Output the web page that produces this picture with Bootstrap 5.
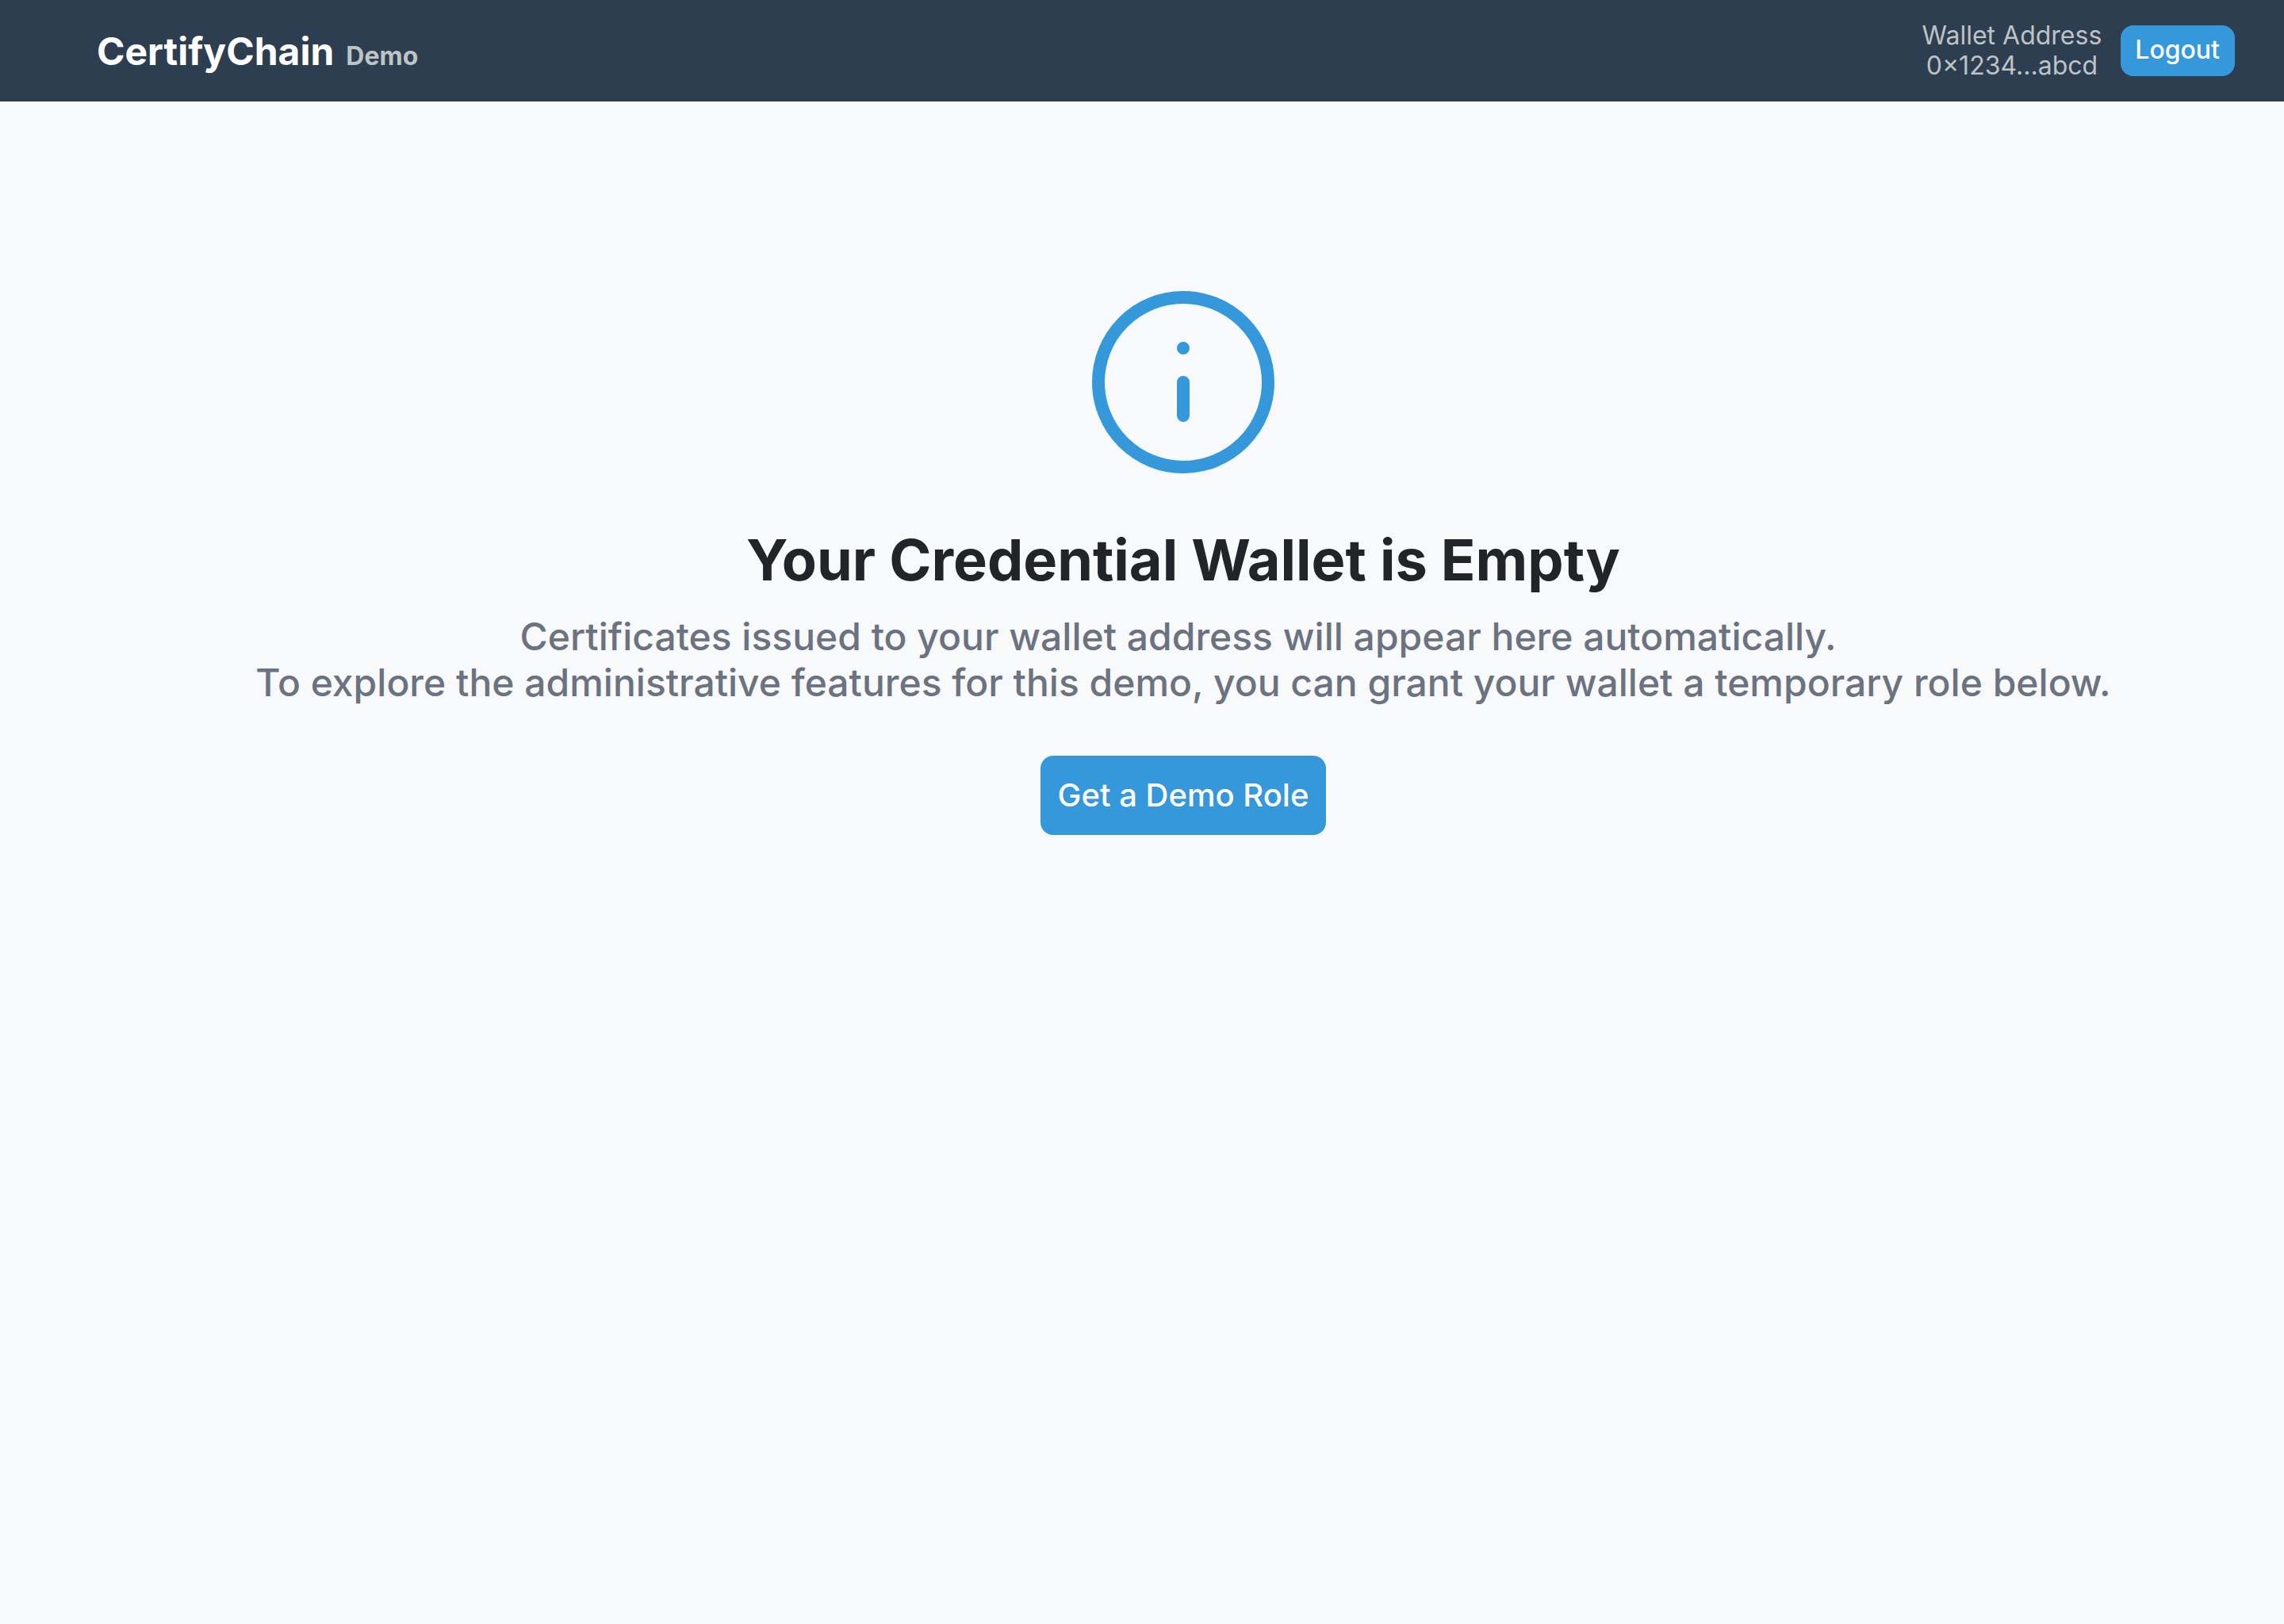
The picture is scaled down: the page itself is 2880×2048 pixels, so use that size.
<!DOCTYPE html>
<html lang="en">
<head>
<meta charset="utf-8">
<meta name="viewport" content="width=device-width, initial-scale=1">
<title>CertifyChain Demo</title>
<link href="https://cdn.jsdelivr.net/npm/bootstrap@5.3.0/dist/css/bootstrap.min.css" rel="stylesheet">
<style>
body{font-family:Inter,sans-serif;background:#f8f9fb;color:#212529}
.topbar{background:#2d3e50;min-height:128px;padding:0 62px 0 122px}
.brand{font-size:48px;line-height:58px;font-weight:700;color:#fff;gap:15px;padding-top:8px}
.brand-tag{font-size:32px;font-weight:700;color:#bdc3c7}
.wallet{font-size:32px;line-height:38px;font-weight:400;color:#bdc3c7}
.btn-blue{background:#3498db;color:#fff;font-weight:500;border:0;border-radius:16px}
.btn-blue:hover{background:#2980b9;color:#fff}
.btn-logout{font-size:32px;line-height:40px;padding:11px 19px 13px 18px}
.btn-role{font-size:40px;line-height:48px;padding:26px 22px}
.empty{padding:239px 0 0 104px}
.info-icon{width:230px;height:230px}
.empty-title{font-size:72px;line-height:88px;font-weight:700;color:#212529;margin:65px 0 24px}
.empty-text{font-size:48px;line-height:58px;font-weight:500;color:#6b7280;margin-bottom:63px}
</style>
</head>
<body>
<header class="topbar d-flex align-items-center justify-content-between">
<a href="#" class="brand d-flex align-items-baseline text-decoration-none">CertifyChain <span class="brand-tag">Demo</span></a>
<div class="d-flex align-items-center gap-4">
<div class="wallet text-center">Wallet Address<br>0×1234...abcd</div>
<button type="button" class="btn btn-blue btn-logout">Logout</button>
</div>
</header>
<main class="empty d-flex flex-column align-items-center text-center">
<svg class="info-icon" viewBox="0 0 230 230" fill="none" stroke="#3498db" stroke-width="16" stroke-linecap="round" aria-hidden="true"><circle cx="115" cy="115" r="107"/><path d="M115 115v42M115 72v.01"/></svg>
<h1 class="empty-title">Your Credential Wallet is Empty</h1>
<p class="empty-text">Certificates issued to your wallet address will appear here automatically.&nbsp;<br>To explore the administrative features for this demo, you can grant your wallet a temporary role below.</p>
<button type="button" class="btn btn-blue btn-role">Get a Demo Role</button>
</main>
<script src="https://cdn.jsdelivr.net/npm/bootstrap@5.3.0/dist/js/bootstrap.bundle.min.js"></script>
</body>
</html>
